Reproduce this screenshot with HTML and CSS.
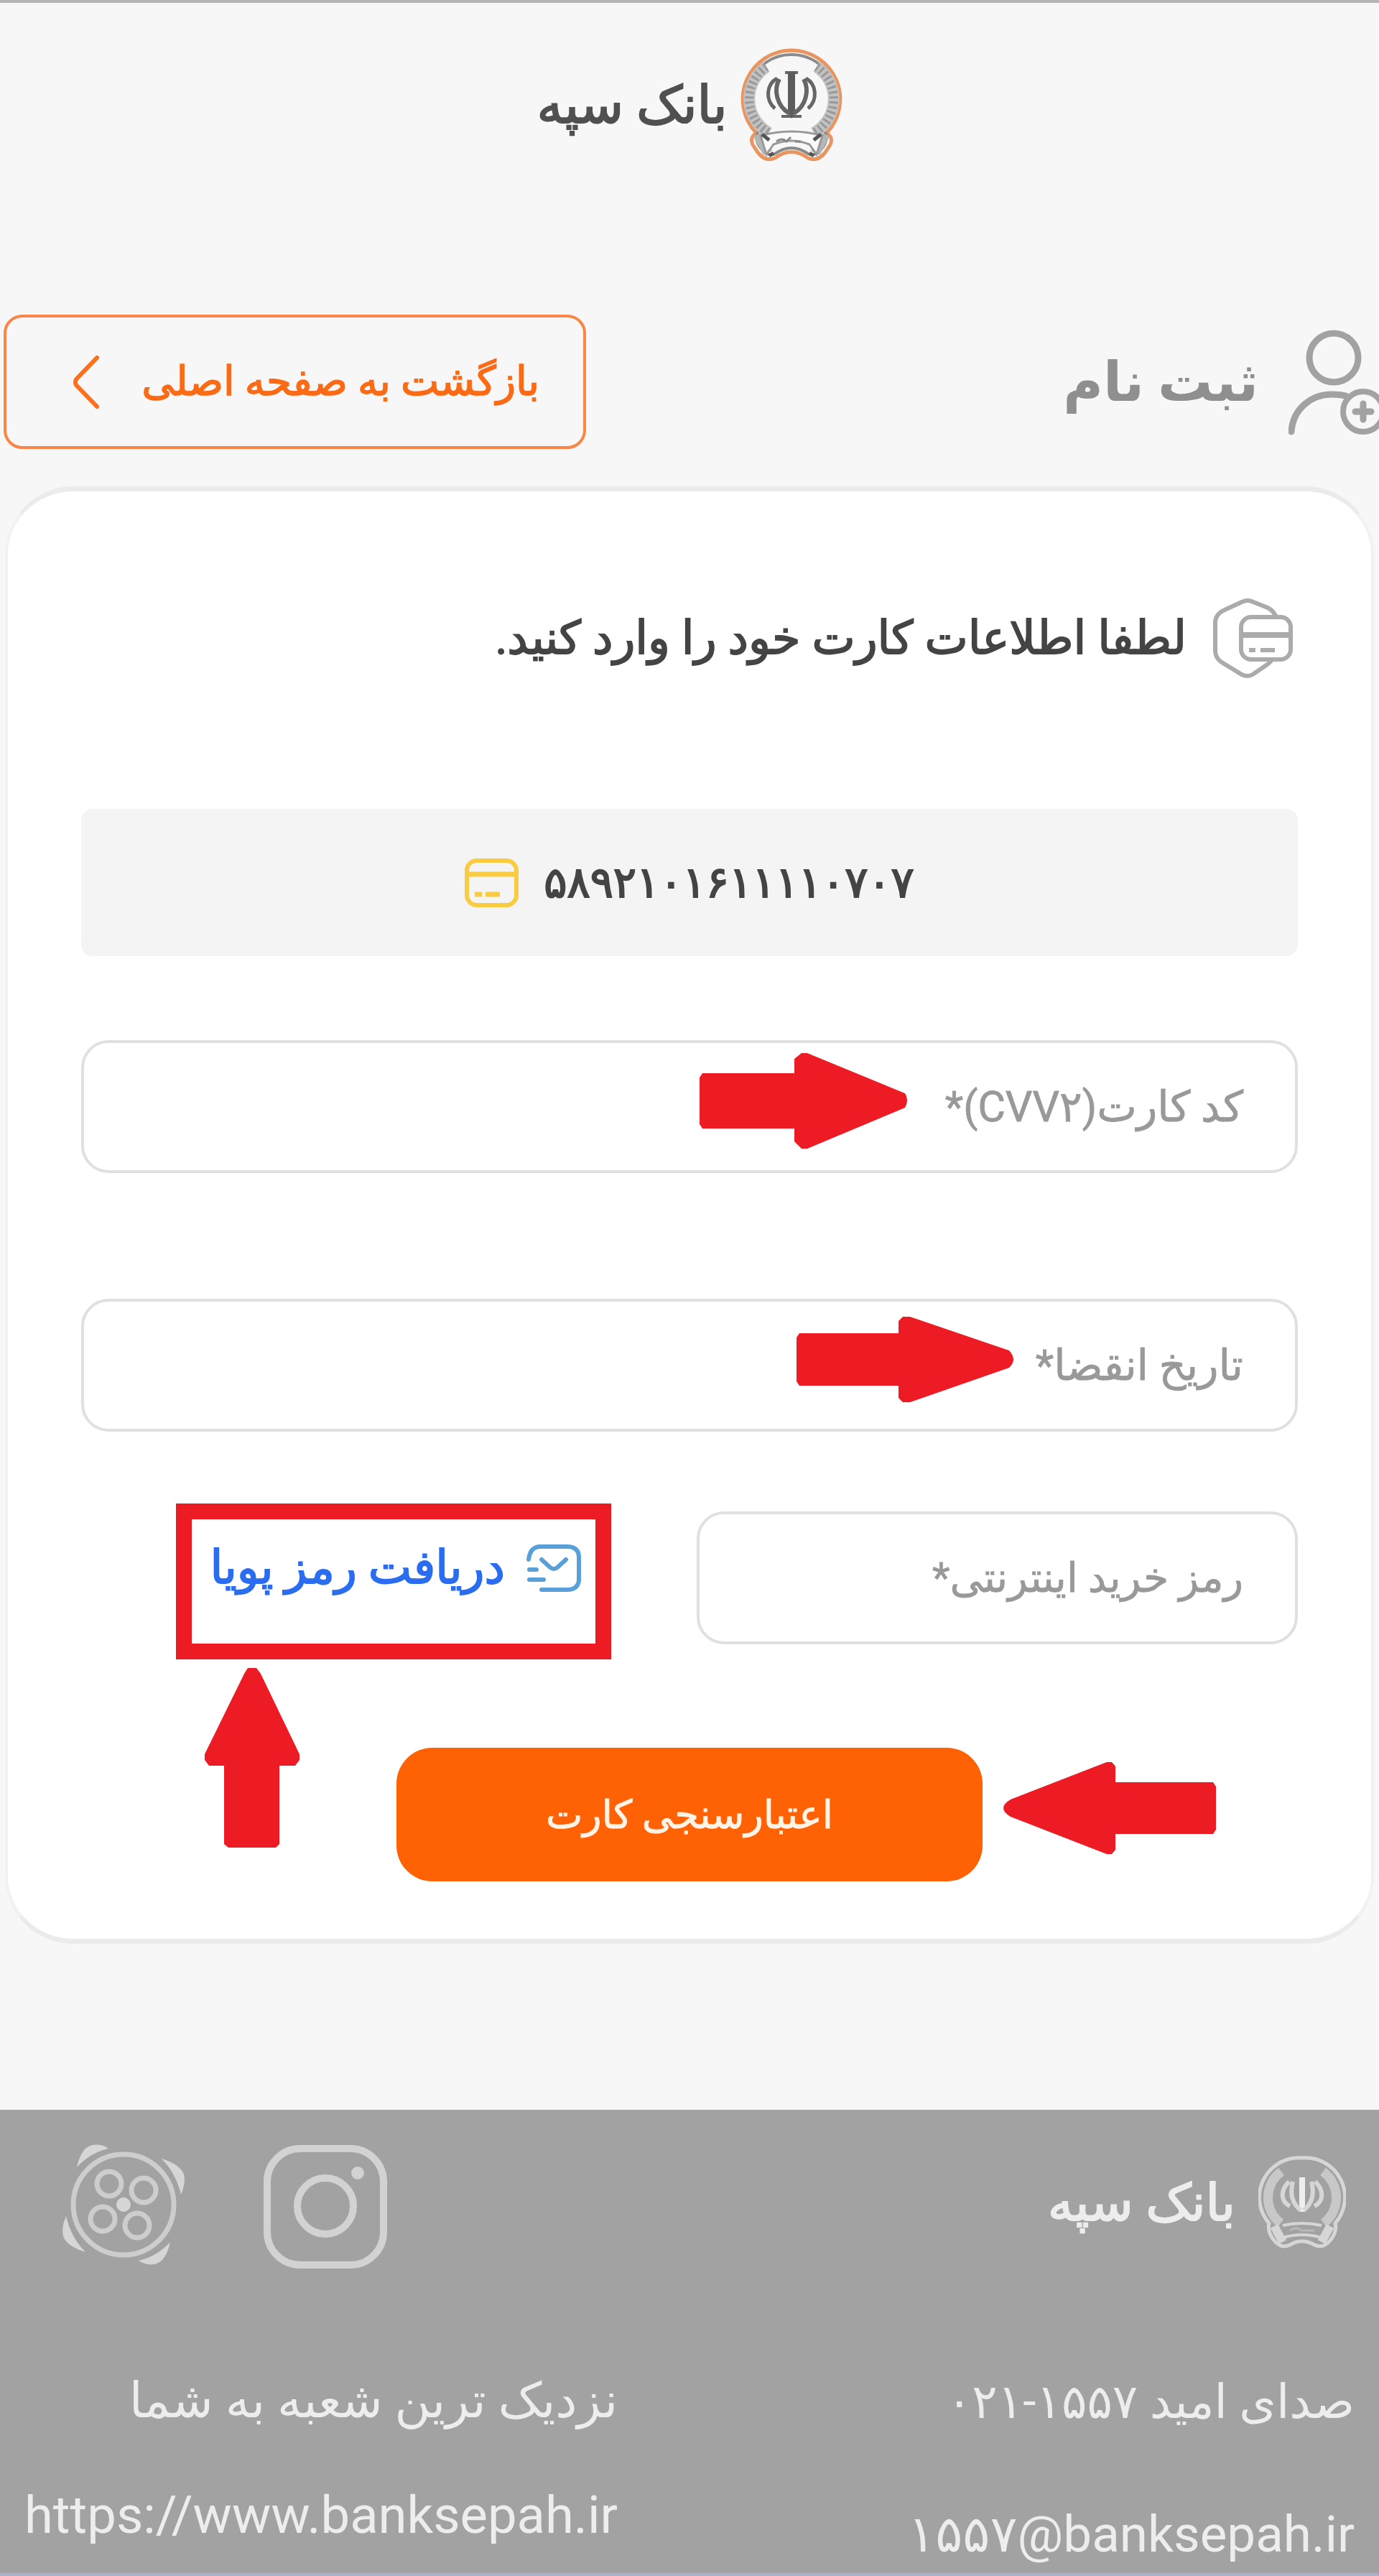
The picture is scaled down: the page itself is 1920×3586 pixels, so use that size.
FILE: index.html
```
<!DOCTYPE html>
<html lang="fa" dir="rtl">
<head>
    <meta charset="UTF-8">
    <meta name="viewport" content="width=device-width, initial-scale=1.0">
    <title>بانک سپه</title>
    <link rel="stylesheet" href="styles.css">
</head>
<body>
    <header class="header">
        <svg class="logo" viewBox="0 0 142 159">
            <path d="M71 3 A68 68 0 0 0 22 118 Q10 126 20 139 Q32 160 48 153 Q71 136 94 153 Q110 160 122 139 Q132 126 120 118 A68 68 0 0 0 71 3Z" fill="#f7f7f7" stroke="#e99560" stroke-width="5"/>
            <path d="M71 9 A62 62 0 0 0 26 114 Q18 126 28 139 Q38 152 48 147 Q71 131 94 147 Q104 152 114 139 Q124 126 116 114 A62 62 0 0 0 71 9Z" fill="none" stroke="#8a8a8a" stroke-width="4"/>
            <path d="M36 26 A54 54 0 0 0 40 118 M106 26 A54 54 0 0 1 102 118" fill="none" stroke="#c2c2c2" stroke-width="16"/>
            <path d="M36 26 A54 54 0 0 0 40 118 M106 26 A54 54 0 0 1 102 118" fill="none" stroke="#999" stroke-width="12" stroke-dasharray="3 4"/>
            <path d="M24 120 L38 146 M118 120 L104 146" stroke="#b5b5b5" stroke-width="14"/>
            <path d="M28 122 Q71 110 114 122 L106 148 L96 134 Q71 124 46 134 L36 148Z" fill="#fafafa" stroke="#999" stroke-width="3"/>
            <path d="M30 120 L40 128 M112 120 L102 128 M40 150 L46 146 M102 150 L96 146" stroke="#555" stroke-width="5"/>
            <path d="M50 130 Q58 124 64 130 L70 124 M76 130 H84" fill="none" stroke="#888" stroke-width="3"/>
            <path d="M62 34 H80 M57 95 H85" stroke="#666" stroke-width="4"/>
            <path d="M66 34 H76 V90 L71 98 L66 90Z" fill="#5c5c5c"/>
            <path d="M54 43 C46 58 50 80 68 91 M88 43 C96 58 92 80 74 91" fill="none" stroke="#666" stroke-width="6"/>
            <path d="M51 42 C36 50 34 72 48 84 M91 42 C106 50 108 72 94 84" fill="none" stroke="#666" stroke-width="5"/>
        </svg>
        <span class="brand-name">بانک سپه</span>
    </header>

    <div class="title-row">
        <div class="title">
            <svg class="user-icon" viewBox="0 0 136 150" fill="none" stroke="#a2a2a2" stroke-width="9" stroke-linecap="round">
                <circle cx="63" cy="41" r="34"/>
                <path d="M4 144 C6 112 32 92 60 92 Q74 92 82 95"/>
                <circle cx="104" cy="116" r="28" stroke-width="8"/>
                <path d="M104 105 V127 M93 116 H115"/>
            </svg>
            <h1>ثبت نام</h1>
        </div>
        <a class="back">
            <span>بازگشت به صفحه اصلی</span>
            <svg class="chevron" viewBox="0 0 38 76" fill="none" stroke="#fb6f1d" stroke-width="6" stroke-linecap="round" stroke-linejoin="round">
                <path d="M34 4 L5 34 Q3 38 5 42 L34 72"/>
            </svg>
        </a>
    </div>

    <main class="card">
        <div class="card-title">
            <svg class="shield-icon" viewBox="0 0 111 112" fill="none" stroke="#ababab" stroke-width="6">
                <path d="M88 26 Q84 17 76 13 L56 5 Q48 1 40 5 L14 17 Q4 22 3 32 V74 Q4 84 12 89 L40 106 Q48 110 55 106 L74 93 Q80 89 82 85"/>
                <rect x="39" y="26" width="69" height="59" rx="14"/>
                <path d="M39 51 H108" stroke-width="8"/>
                <path d="M50 72 H59 M66 72 H86"/>
            </svg>
            <h2>لطفا اطلاعات کارت خود را وارد کنید.</h2>
        </div>

        <div class="card-number">
            <span class="digits">۵۸۹۲۱۰۱۶۱۱۱۱۰۷۰۷</span>
            <svg class="card-icon" viewBox="0 0 75 68" fill="none" stroke="#f8cb40" stroke-width="6">
                <rect x="3" y="3" width="69" height="62" rx="14"/>
                <path d="M3 22 H72" stroke-width="7"/>
                <path d="M14 50 H24 M29 50 H49" stroke-width="7"/>
            </svg>
        </div>

        <div class="field cvv"><label>کد کارت(CVV۲)*</label></div>
        <div class="field expiry"><label>تاریخ انقضا*</label></div>

        <div class="pin-row">
            <div class="field pin"><label>رمز خرید اینترنتی*</label></div>
            <a class="otp">
                <svg class="mail-icon" viewBox="0 0 76 66" fill="none" stroke="#5aa0d8" stroke-width="6" stroke-linecap="round">
                    <path d="M3 21 Q5 4 18 3 H58 Q73 4 73 18 V48 Q73 62 58 63 H21"/>
                    <path d="M21 21 L33 32 Q38 36 43 32 L55 21"/>
                    <path d="M4 35 H14 M4 49 H24"/>
                </svg>
                <span>دریافت رمز پویا</span>
            </a>
        </div>

        <button class="submit">اعتبارسنجی کارت</button>

        <svg class="mark arrow-cvv" viewBox="0 0 290 133"><path d="M4 28 H132 V8 L142 0 H150 L286 56 Q292 66 286 76 L150 133 H142 L132 123 V105 H4 L0 99 V34Z"/></svg>
        <svg class="mark arrow-expiry" viewBox="0 0 304 119"><path d="M4 23 H142 V6 L148 0 H158 L296 47 Q308 60 296 71 L158 119 H148 L142 113 V96 H4 L0 90 V29Z"/></svg>
        <svg class="mark arrow-otp" viewBox="0 0 132 250"><path d="M60 0 H72 L78 8 L132 120 V128 L126 136 H104 V245 L99 250 H33 L27 245 V136 H6 L0 128 V120 L55 8Z"/></svg>
        <svg class="mark arrow-submit" viewBox="0 0 298 128"><path d="M294 28 H158 V6 L153 0 H146 L12 52 Q-8 64 12 76 L146 128 H153 L158 122 V100 H294 L298 94 V34Z"/></svg>
    </main>

    <footer class="footer">
        <div class="col">
            <div class="foot-brand">
                <svg class="foot-logo" viewBox="0 0 122 130" fill="none" stroke="#d6d6d6">
                    <path d="M61 3 A55 55 0 0 0 15 94 Q12 106 22 118 Q32 130 44 124 Q61 114 78 124 Q90 130 100 118 Q110 106 107 94 A55 55 0 0 0 61 3Z" stroke-width="5"/>
                    <path d="M32 22 A45 45 0 0 0 31 94 M90 22 A45 45 0 0 1 91 94" stroke="#c8c8c8" stroke-width="13"/>
                    <path d="M22 98 L34 120 M100 98 L88 120" stroke-width="12"/>
                    <path d="M34 97 Q61 91 88 97 M34 114 Q61 106 88 114" stroke-width="4"/>
                    <path d="M44 104 Q54 98 60 104 L78 104" stroke="#b8b8b8" stroke-width="3"/>
                    <path d="M61 30 V78" stroke="#eee" stroke-width="8"/>
                    <path d="M48 36 C44 52 46 66 59 76 M74 36 C78 52 76 66 63 76" stroke-width="6"/>
                    <path d="M43 36 C30 48 31 64 44 70 M79 36 C92 48 91 64 78 70" stroke-width="6"/>
                </svg>
                <span>بانک سپه</span>
            </div>
            <p class="phone">صدای امید <bdi dir="ltr">۰۲۱-۱۵۵۷</bdi></p>
            <p class="email" dir="ltr">۱۵۵۷@banksepah.ir</p>
        </div>
        <div class="col">
            <div class="social">
                <svg class="instagram" viewBox="0 0 174 174" fill="none" stroke="#d2d2d2" stroke-width="10">
                    <rect x="6" y="6" width="162" height="162" rx="46"/>
                    <circle cx="87" cy="86" r="39"/>
                    <circle cx="132" cy="40" r="9" fill="#d2d2d2" stroke="none"/>
                </svg>
                <svg class="aparat" viewBox="0 0 174 168" fill="none" stroke="#cdcdcd" stroke-width="7">
                    <circle cx="87" cy="84" r="70"/>
                    <circle cx="67" cy="55" r="17"/>
                    <circle cx="115" cy="64" r="17"/>
                    <circle cx="58" cy="104" r="17"/>
                    <circle cx="106" cy="113" r="17"/>
                    <circle cx="87" cy="84" r="10" fill="#d6d6d6" stroke="none"/>
                    <g fill="#d6d6d6" stroke="none">
                        <path d="M22 32 Q28 4 44 1 Q56 -1 66 6 Q40 12 22 32Z"/>
                        <path d="M140 20 Q166 28 171 42 Q174 54 167 70 Q160 40 140 20Z"/>
                        <path d="M152 136 Q146 164 130 167 Q118 169 108 162 Q134 156 152 136Z"/>
                        <path d="M34 150 Q8 142 3 128 Q0 116 7 100 Q14 130 34 150Z"/>
                    </g>
                </svg>
            </div>
            <p class="branch">نزدیک ترین شعبه به شما</p>
            <p class="url" dir="ltr">https://www.banksepah.ir</p>
        </div>
    </footer>
</body>
</html>
```
FILE: styles.css
```
* {
    box-sizing: border-box;
}
body {
    margin: 0;
    height: 3586px;
    display: flex;
    flex-direction: column;
    border-top: 4px solid #b5b5b5;
    background-color: #f7f7f7;
    font-family: Roboto, "DejaVu Sans", sans-serif;
    line-height: 1;
    overflow: hidden;
}
h1, h2, p {
    margin: 0;
    white-space: nowrap;
}
svg {
    display: block;
    flex: none;
}
.header {
    height: 285px;
    display: flex;
    align-items: center;
    justify-content: center;
    gap: 18px;
    color: #505050;
}
.logo {
    width: 142px;
    height: 159px;
}
.brand-name {
    font-size: 72px;
    -webkit-text-stroke: 2px #505050;
}
.title-row {
    height: 187px;
    margin-top: 149px;
    padding-left: 5px;
    display: flex;
    align-items: center;
    justify-content: space-between;
}
.title {
    display: flex;
    align-items: center;
    gap: 42px;
    margin-right: -10px;
}
.user-icon {
    width: 136px;
    height: 150px;
}
h1 {
    font-size: 76px;
    color: #8f8f8f;
}
.back {
    width: 811px;
    height: 187px;
    padding: 0 61px 0 92px;
    display: flex;
    align-items: center;
    justify-content: space-between;
    border: 4px solid #f98647;
    border-radius: 26px;
    color: #fb6a14;
    font-size: 56.5px;
    white-space: nowrap;
    -webkit-text-stroke: 1.5px #fb6a14;
}
.chevron {
    width: 38px;
    height: 76px;
}
.card {
    position: relative;
    height: 2029px;
    margin: 52px 7px 0;
    padding: 149px 102px 0;
    background-color: #fff;
    border: solid;
    border-width: 7px 4px;
    border-color: #ebebeb #f2f2f2;
    border-radius: 95px;
}
.card-title {
    height: 112px;
    padding-right: 7px;
    display: flex;
    align-items: center;
    gap: 37px;
}
.shield-icon {
    width: 111px;
    height: 112px;
}
h2 {
    font-size: 64px;
    font-weight: 400;
    color: #444;
    -webkit-text-stroke: 1.8px #444;
}
.card-number {
    height: 205px;
    margin-top: 181px;
    display: flex;
    align-items: center;
    justify-content: center;
    gap: 35px;
    background-color: #f4f4f4;
    border-radius: 16px;
}
.digits {
    font-size: 60px;
    color: #444;
    -webkit-text-stroke: 2px #444;
}
.card-icon {
    width: 75px;
    height: 68px;
}
.field {
    height: 185px;
    padding-right: 72px;
    display: flex;
    align-items: center;
    border: 4px solid #e0e0e0;
    border-radius: 38px;
    color: #999;
    font-size: 59px;
    white-space: nowrap;
    -webkit-text-stroke: 0.8px #999;
}
.cvv {
    margin-top: 117px;
}
.expiry {
    margin-top: 175px;
}
.pin-row {
    margin-top: 100px;
    display: flex;
    align-items: flex-start;
    gap: 119px;
}
.pin {
    width: 837px;
    margin-top: 11px;
    font-size: 57px;
}
.otp {
    width: 606px;
    height: 217px;
    padding: 0 20px 38px;
    display: flex;
    align-items: center;
    gap: 30px;
    border: 22px solid #ed1c24;
    color: #2b6df0;
    font-size: 64px;
    white-space: nowrap;
    -webkit-text-stroke: 1.8px #2b6df0;
}
.mail-icon {
    width: 76px;
    height: 66px;
}
.submit {
    display: block;
    width: 816px;
    height: 186px;
    margin: 123px auto 0;
    padding: 0;
    background-color: #ff6205;
    color: #fff3e6;
    border: none;
    border-radius: 50px;
    font-family: inherit;
    font-size: 54.5px;
    -webkit-text-stroke: 1px #fff3e6;
    cursor: pointer;
}

/* red pointers over the form */
.mark {
    position: absolute;
    fill: #ed1c24;
}
.arrow-cvv {
    left: 963px;
    top: 782px;
    width: 290px;
    height: 133px;
}
.arrow-expiry {
    left: 1098px;
    top: 1149px;
    width: 304px;
    height: 119px;
}
.arrow-otp {
    left: 274px;
    top: 1638px;
    width: 132px;
    height: 250px;
}
.arrow-submit {
    left: 1384px;
    top: 1769px;
    width: 298px;
    height: 128px;
}

.footer {
    height: 649px;
    margin-top: auto;
    padding: 0 34px;
    display: flex;
    justify-content: space-between;
    background-color: #a2a2a2;
    border-bottom: 4px solid #aab2c6;
    color: #ededed;
}
.col {
    display: flex;
    flex-direction: column;
}
.foot-brand {
    height: 130px;
    margin: 64px 12px 0 0;
    display: flex;
    align-items: center;
    gap: 32px;
    font-size: 71px;
    -webkit-text-stroke: 2px #ededed;
}
.foot-logo {
    width: 122px;
    height: 130px;
}
.phone {
    margin-top: 180px;
    font-size: 66px;
}
.email {
    margin-top: 115px;
    font-size: 71px;
}
.social {
    margin: 48px 320px 0 0;
    display: flex;
    gap: 107px;
}
.instagram {
    width: 174px;
    height: 174px;
}
.aparat {
    width: 174px;
    height: 168px;
}
.branch {
    margin-top: 149px;
    font-size: 68px;
}
.url {
    margin-top: 90px;
    font-size: 72.4px;
}
```
